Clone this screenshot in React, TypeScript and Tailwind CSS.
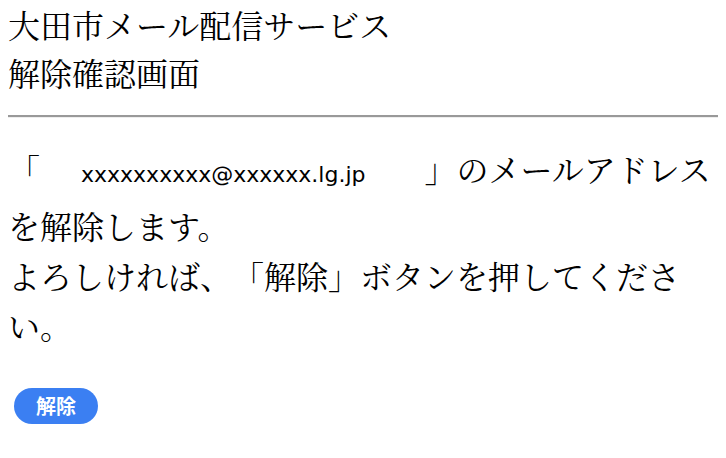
export default function App() {
    const email = "xxxxxxxxxx@xxxxxx.lg.jp";

    return (
        <div className="min-h-screen bg-white px-2 text-black font-['Noto_Serif_CJK_JP',serif,'Noto_Sans_CJK_JP',sans-serif] [text-spacing-trim:space-all]">
            {/* タイトル */}
            <h1 className="text-[32px] leading-[48px] font-normal">
                大田市メール配信サービス
                <br />
                解除確認画面
            </h1>

            <hr className="mt-[19px] h-[3px] border-0 border-t-2 border-b border-t-[#999999] border-b-[#eeeeee]" />

            {/* 本文 */}
            <p className="mt-[25px] text-[32px] leading-[50px]">
                「
                <span className="ml-[41px] mr-[59px] font-['DejaVu_Sans',sans-serif] text-[22px]">
                    {email}
                </span>
                」のメールアドレスを解除します。
                <br />
                よろしければ、「解除」ボタンを押してください。
            </p>

            <button className="mt-[38px] ml-[6px] h-[36px] rounded-full bg-[#3b7ff2] px-[22px] font-['Noto_Sans_CJK_JP',sans-serif] text-[20px] font-bold leading-[36px] text-white">
                解除
            </button>
        </div>
    );
}
